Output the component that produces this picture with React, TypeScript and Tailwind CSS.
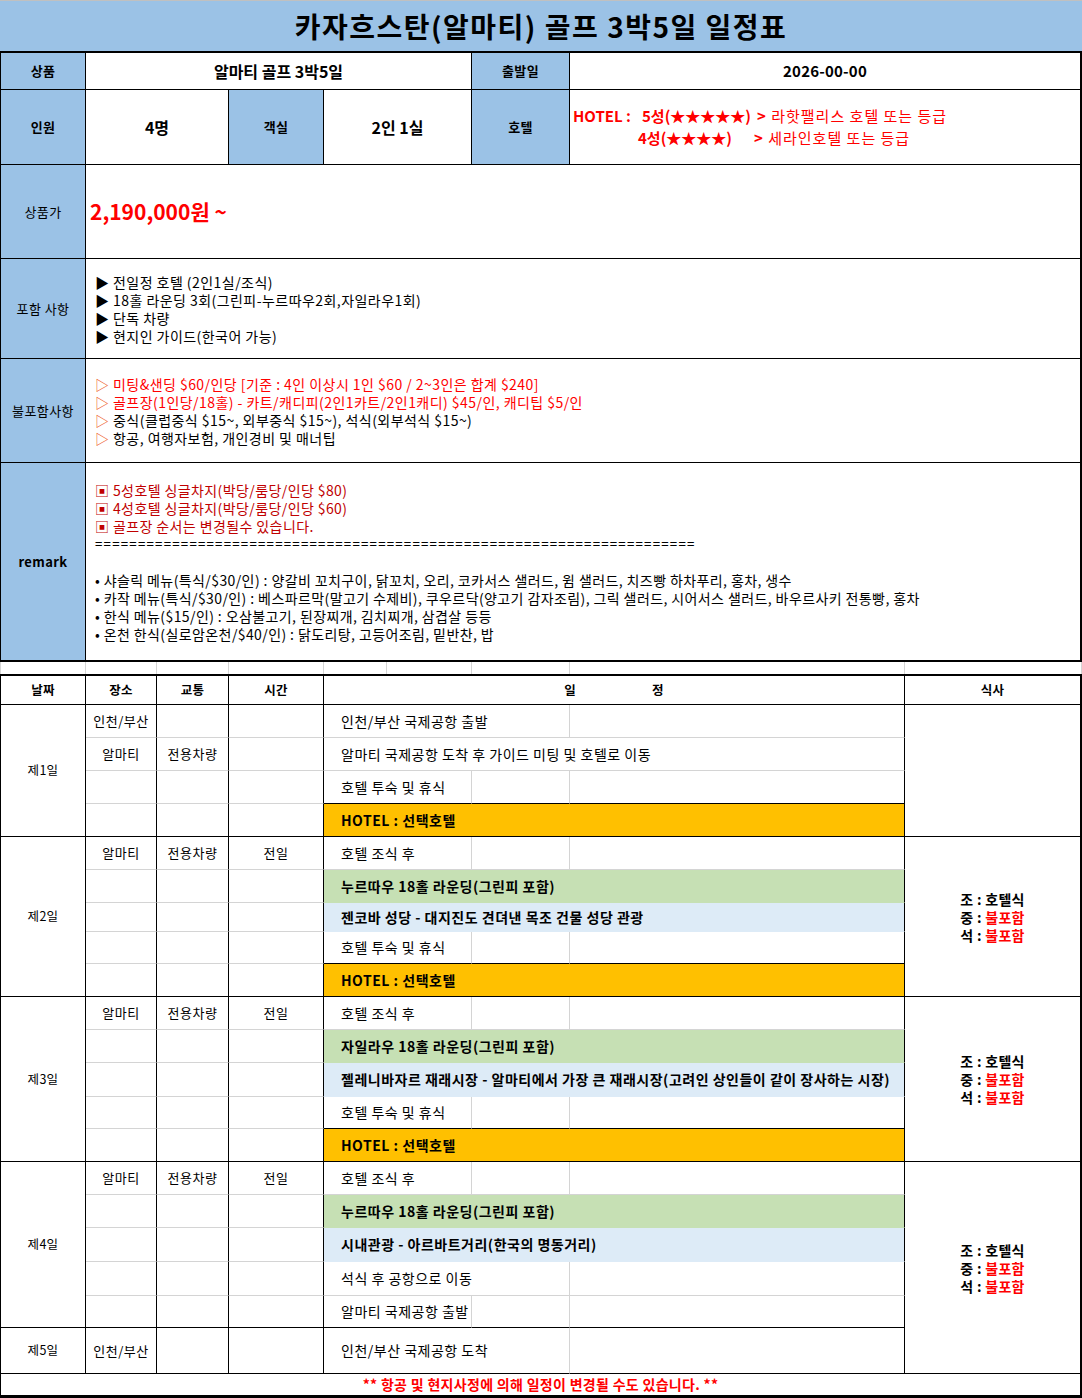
import React from 'react';

type Kind = 'one' | 'two' | 'full' | 'green' | 'blue' | 'hotel';
type Row = { h: string; place?: string; trans?: string; time?: string; kind: Kind; text: string };
type Day = { label: string; rows: Row[] };
type Group = { days: Day[]; meal: boolean };

const groups: Group[] = [
  {
    meal: false,
    days: [
      {
        label: '제1일',
        rows: [
          { h: 'h-[33px]', place: '인천/부산', kind: 'two', text: '인천/부산 국제공항 출발' },
          { h: 'h-[33px]', place: '알마티', trans: '전용차량', kind: 'full', text: '알마티 국제공항 도착 후 가이드 미팅 및 호텔로 이동' },
          { h: 'h-[33px]', kind: 'one', text: '호텔 투숙 및 휴식' },
          { h: 'h-[33px]', kind: 'hotel', text: 'HOTEL : 선택호텔' },
        ],
      },
    ],
  },
  {
    meal: true,
    days: [
      {
        label: '제2일',
        rows: [
          { h: 'h-[33px]', place: '알마티', trans: '전용차량', time: '전일', kind: 'one', text: '호텔 조식 후' },
          { h: 'h-[33px]', kind: 'green', text: '누르따우 18홀 라운딩(그린피 포함)' },
          { h: 'h-[29px]', kind: 'blue', text: '젠코바 성당 - 대지진도 견뎌낸 목조 건물 성당 관광' },
          { h: 'h-[32px]', kind: 'one', text: '호텔 투숙 및 휴식' },
          { h: 'h-[33px]', kind: 'hotel', text: 'HOTEL : 선택호텔' },
        ],
      },
    ],
  },
  {
    meal: true,
    days: [
      {
        label: '제3일',
        rows: [
          { h: 'h-[33px]', place: '알마티', trans: '전용차량', time: '전일', kind: 'one', text: '호텔 조식 후' },
          { h: 'h-[33px]', kind: 'green', text: '자일라우 18홀 라운딩(그린피 포함)' },
          { h: 'h-[34px]', kind: 'blue', text: '젤레니바자르 재래시장 - 알마티에서 가장 큰 재래시장(고려인 상인들이 같이 장사하는 시장)' },
          { h: 'h-[32px]', kind: 'one', text: '호텔 투숙 및 휴식' },
          { h: 'h-[33px]', kind: 'hotel', text: 'HOTEL : 선택호텔' },
        ],
      },
    ],
  },
  {
    meal: true,
    days: [
      {
        label: '제4일',
        rows: [
          { h: 'h-[33px]', place: '알마티', trans: '전용차량', time: '전일', kind: 'one', text: '호텔 조식 후' },
          { h: 'h-[33px]', kind: 'green', text: '누르따우 18홀 라운딩(그린피 포함)' },
          { h: 'h-[34px]', kind: 'blue', text: '시내관광 - 아르바트거리(한국의 명동거리)' },
          { h: 'h-[34px]', kind: 'two', text: '석식 후 공항으로 이동' },
          { h: 'h-[32px]', kind: 'one', text: '알마티 국제공항 출발' },
        ],
      },
      {
        label: '제5일',
        rows: [{ h: 'h-[46px]', place: '인천/부산', kind: 'two', text: '인천/부산 국제공항 도착' }],
      },
    ],
  },
];

function SRow({ row, last, nextHotel }: { row: Row; last: boolean; nextHotel: boolean }) {
  const lb = last ? 'border-b-black' : 'border-b-[#d4d4d4]';
  let sb = 'border-b-[#d4d4d4]';
  if (last || nextHotel) sb = 'border-b-black';
  else if (row.kind === 'green') sb = 'border-b-[#C6E0B4]';
  else if (row.kind === 'blue') sb = 'border-b-[#DDEBF7]';
  const side = `shrink-0 border-r border-b border-r-black ${lb} flex items-center justify-center text-[13px] tracking-[0.5px] whitespace-nowrap`;
  const txt = 'flex items-center pl-[17px] whitespace-nowrap text-[14px] tracking-[0.5px]';
  let sched: React.ReactNode;
  if (row.kind === 'one') {
    sched = (
      <>
        <div className={`w-[148px] shrink-0 border-r border-b border-r-[#d4d4d4] ${sb} ${txt}`}>{row.text}</div>
        <div className={`w-[98px] shrink-0 border-r border-b border-r-[#d4d4d4] ${sb}`} />
        <div className={`w-[335px] shrink-0 border-r border-b border-r-black ${sb}`} />
      </>
    );
  } else if (row.kind === 'two') {
    sched = (
      <>
        <div className={`w-[246px] shrink-0 border-r border-b border-r-[#d4d4d4] ${sb} ${txt}`}>{row.text}</div>
        <div className={`w-[335px] shrink-0 border-r border-b border-r-black ${sb}`} />
      </>
    );
  } else {
    let bg = 'bg-white';
    let wt = '';
    if (row.kind === 'green') {
      bg = 'bg-[#C6E0B4]';
      wt = 'font-bold';
    } else if (row.kind === 'blue') {
      bg = 'bg-[#DDEBF7]';
      wt = 'font-bold';
    } else if (row.kind === 'hotel') {
      bg = 'bg-[#FFC000]';
      wt = 'font-bold';
    }
    sched = <div className={`w-[581px] shrink-0 border-r border-b border-r-black ${sb} ${bg} ${wt} ${txt}`}>{row.text}</div>;
  }
  return (
    <div className={`flex ${row.h}`}>
      <div className={`w-[71px] ${side}`}>{row.place}</div>
      <div className={`w-[72px] ${side}`}>{row.trans}</div>
      <div className={`w-[95px] ${side}`}>{row.time}</div>
      {sched}
    </div>
  );
}

function DayBlock({ day }: { day: Day }) {
  return (
    <div className="flex">
      <div className="w-[85px] shrink-0 border-r border-b border-black flex items-center justify-center text-[12.5px] tracking-[0.3px]">{day.label}</div>
      <div className="w-[819px] shrink-0 flex flex-col">
        {day.rows.map((r, i) => (
          <SRow key={i} row={r} last={i === day.rows.length - 1} nextHotel={i + 1 < day.rows.length && day.rows[i + 1].kind === 'hotel'} />
        ))}
      </div>
    </div>
  );
}

function Meal() {
  return (
    <div className="text-[14px] tracking-[0.3px] font-bold leading-[18px] whitespace-nowrap">
      <div>조 : 호텔식</div>
      <div>
        중 : <span className="text-[#FF0000]">불포함</span>
      </div>
      <div>
        석 : <span className="text-[#FF0000]">불포함</span>
      </div>
    </div>
  );
}

function Label({ w, bold, children }: { w: string; bold?: boolean; children: React.ReactNode }) {
  return (
    <div className={`${w} shrink-0 border-r border-black bg-[#9BC2E6] flex items-center justify-center text-[13px] tracking-[0.4px] whitespace-nowrap ${bold ? 'font-bold' : ''}`}>
      {children}
    </div>
  );
}

const equals = '======================================================================';

export default function App() {
  return (
    <div className="w-[1082px] bg-white text-black font-['Noto_Sans_CJK_KR','Noto_Sans',sans-serif]">
      <div className="h-[53px] bg-[#9BC2E6] border-t border-t-[#c0c0c0] border-b-2 border-b-black flex items-center justify-center text-[28px] tracking-[1.5px] font-bold leading-none">
        카자흐스탄(알마티) 골프 3박5일 일정표
      </div>

      <div className="border-l border-black">
        <div className="flex h-[37px] border-b border-black">
          <Label w="w-[85px]" bold>상품</Label>
          <div className="w-[386px] shrink-0 border-r border-black flex items-center justify-center text-[16px] font-bold">알마티 골프 3박5일</div>
          <Label w="w-[98px]" bold>출발일</Label>
          <div className="w-[512px] shrink-0 border-r-2 border-black flex items-center justify-center text-[15px] tracking-[0.2px] font-bold">2026-00-00</div>
        </div>

        <div className="flex h-[75px] border-b border-black">
          <Label w="w-[85px]" bold>인원</Label>
          <div className="w-[143px] shrink-0 border-r border-black flex items-center justify-center text-[16px] font-bold">4명</div>
          <Label w="w-[95px]" bold>객실</Label>
          <div className="w-[148px] shrink-0 border-r border-black flex items-center justify-center text-[16px] font-bold">2인 1실</div>
          <Label w="w-[98px]" bold>호텔</Label>
          <div className="w-[512px] shrink-0 border-r-2 border-black flex flex-col justify-center pl-[3px] text-[15px] leading-[22px] text-[#FF0000] whitespace-nowrap">
            <div className="flex">
              <span className="w-[69px] shrink-0 font-bold">HOTEL :</span>
              <span className="w-[115px] shrink-0 font-bold">5성(★★★★★)</span>
              <span className="tracking-[1px]">
                <b>&gt;</b> 라핫팰리스 호텔 또는 등급
              </span>
            </div>
            <div className="flex">
              <span className="w-[65px] shrink-0" />
              <span className="w-[116px] shrink-0 font-bold">4성(★★★★)</span>
              <span className="tracking-[1px]">
                <b>&gt;</b> 세라인호텔 또는 등급
              </span>
            </div>
          </div>
        </div>

        <div className="flex h-[94px] border-b border-black">
          <Label w="w-[85px]">상품가</Label>
          <div className="w-[996px] shrink-0 border-r-2 border-black flex items-center pl-[4px] text-[21px] font-bold text-[#FF0000]">2,190,000원 ~</div>
        </div>

        <div className="flex h-[100px] border-b border-black">
          <Label w="w-[85px]">포함 사항</Label>
          <div className="w-[996px] shrink-0 border-r-2 border-black flex flex-col justify-center pl-[9px] text-[14px] tracking-[0.45px] leading-[18px] whitespace-nowrap">
            <div>▶ 전일정 호텔 (2인1실/조식)</div>
            <div>▶ 18홀 라운딩 3회(그린피-누르따우2회,자일라우1회)</div>
            <div>▶ 단독 차량</div>
            <div>▶ 현지인 가이드(한국어 가능)</div>
          </div>
        </div>

        <div className="flex h-[104px] border-b border-black">
          <Label w="w-[85px]">불포함사항</Label>
          <div className="w-[996px] shrink-0 border-r-2 border-black flex flex-col justify-center pl-[9px] text-[14px] tracking-[0.45px] leading-[18px] whitespace-nowrap">
            <div className="text-[#FF0000]">
              <span className="text-[#EE5A24]">▷</span> 미팅&amp;샌딩 $60/인당 [기준 : 4인 이상시 1인 $60 / 2~3인은 합계 $240]
            </div>
            <div className="text-[#FF0000]">
              <span className="text-[#EE5A24]">▷</span> 골프장(1인당/18홀) - 카트/캐디피(2인1카트/2인1캐디) $45/인, 캐디팁 $5/인
            </div>
            <div>
              <span className="text-[#EE5A24]">▷</span> 중식(클럽중식 $15~, 외부중식 $15~), 석식(외부석식 $15~)
            </div>
            <div>
              <span className="text-[#EE5A24]">▷</span> 항공, 여행자보험, 개인경비 및 매너팁
            </div>
          </div>
        </div>

        <div className="flex h-[199px] border-b-2 border-black">
          <Label w="w-[85px]" bold>remark</Label>
          <div className="w-[996px] shrink-0 border-r-2 border-black flex flex-col justify-center pl-[9px] text-[14px] tracking-[0.4px] leading-[18px] whitespace-nowrap">
            <div className="text-[#C00000]">▣ 5성호텔 싱글차지(박당/룸당/인당 $80)</div>
            <div className="text-[#C00000]">▣ 4성호텔 싱글차지(박당/룸당/인당 $60)</div>
            <div className="text-[#C00000]">▣ 골프장 순서는 변경될수 있습니다.</div>
            <div className="text-[13.3px] tracking-[1.2px]">{equals}</div>
            <div className="h-[18px]" />
            <div>• 샤슬릭 메뉴(특식/$30/인) : 양갈비 꼬치구이, 닭꼬치, 오리, 코카서스 샐러드, 윔 샐러드, 치즈빵 하차푸리, 홍차, 생수</div>
            <div>• 카작 메뉴(특식/$30/인) : 베스파르막(말고기 수제비), 쿠우르닥(양고기 감자조림), 그릭 샐러드, 시어서스 샐러드, 바우르사키 전통빵, 홍차</div>
            <div>• 한식 메뉴($15/인) : 오삼불고기, 된장찌개, 김치찌개, 삼겹살 등등</div>
            <div>• 온천 한식(실로암온천/$40/인) : 닭도리탕, 고등어조림, 밑반찬, 밥</div>
          </div>
        </div>
      </div>

      <div className="flex h-[12px] border-l border-l-[#d4d4d4]">
        <div className="w-[85px] shrink-0 border-r border-r-[#d4d4d4]" />
        <div className="w-[71px] shrink-0 border-r border-r-[#d4d4d4]" />
        <div className="w-[72px] shrink-0 border-r border-r-[#d4d4d4]" />
        <div className="w-[95px] shrink-0 border-r border-r-[#d4d4d4]" />
        <div className="w-[63px] shrink-0 border-r border-r-[#d4d4d4]" />
        <div className="w-[85px] shrink-0 border-r border-r-[#d4d4d4]" />
        <div className="w-[98px] shrink-0 border-r border-r-[#d4d4d4]" />
        <div className="w-[335px] shrink-0 border-r border-r-[#d4d4d4]" />
        <div className="w-[177px] shrink-0 border-r border-r-[#d4d4d4]" />
      </div>

      <div className="border-t-2 border-l border-black">
        <div className="flex h-[29px] border-b border-black text-[12.5px] tracking-[0.3px] font-bold">
          <div className="w-[85px] shrink-0 border-r border-black flex items-center justify-center">날짜</div>
          <div className="w-[71px] shrink-0 border-r border-black flex items-center justify-center">장소</div>
          <div className="w-[72px] shrink-0 border-r border-black flex items-center justify-center">교통</div>
          <div className="w-[95px] shrink-0 border-r border-black flex items-center justify-center">시간</div>
          <div className="w-[581px] shrink-0 border-r border-black flex items-center justify-center gap-[76px]">
            <span>일</span>
            <span>정</span>
          </div>
          <div className="w-[177px] shrink-0 border-r-2 border-black flex items-center justify-center">식사</div>
        </div>

        {groups.map((g, gi) => (
          <div key={gi} className="flex">
            <div className="w-[904px] shrink-0 flex flex-col">
              {g.days.map((d, di) => (
                <DayBlock key={di} day={d} />
              ))}
            </div>
            <div className="w-[177px] shrink-0 border-r-2 border-b border-black flex items-center justify-center">{g.meal && <Meal />}</div>
          </div>
        ))}

        <div className="flex h-[24px] border-b-[3px] border-r-2 border-black items-center justify-center text-[14px] tracking-[0.3px] font-bold text-[#FF0000] whitespace-nowrap">
          ** 항공 및 현지사정에 의해 일정이 변경될 수도 있습니다. **
        </div>
      </div>
    </div>
  );
}
